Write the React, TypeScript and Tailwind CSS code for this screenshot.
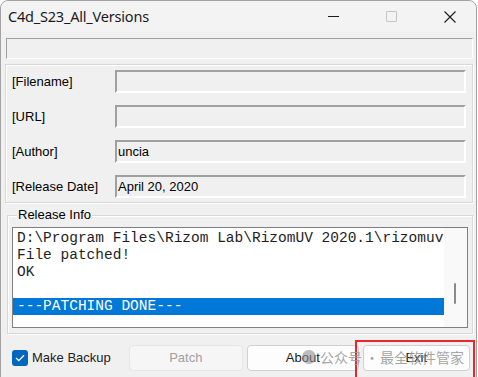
import React from "react";

const fieldRows = [
    { label: "[Filename]", value: "" },
    { label: "[URL]", value: "" },
    { label: "[Author]", value: "uncia" },
    { label: "[Release Date]", value: "April 20, 2020" },
];

const logLines = [
    "D:\\Program Files\\Rizom Lab\\RizomUV 2020.1\\rizomuv",
    "File patched!",
    "OK",
    "",
];

export default function App() {
    return (
        <div className="relative w-[478px] h-[377px] bg-white overflow-hidden font-['Liberation_Sans',Arial,sans-serif] text-[13px] text-black">
            <div className="w-[477px] h-[390px] rounded-t-[8px] border border-[#a3a3a3] bg-[#f0f0f0] flex flex-col">
                {/* title bar */}
                <div className="h-[31px] flex items-center bg-[#f3f3f3] rounded-t-[8px]">
                    <span className="ml-[7px] text-[14.5px] text-[#1b1b1b] font-['Noto_Sans',sans-serif] tracking-[-0.2px]">
                        C4d_S23_All_Versions
                    </span>
                    <div className="ml-auto flex items-center h-full">
                        <div className="w-[46px] h-full flex items-center justify-center">
                            <div className="w-[11px] h-px bg-[#1b1b1b]" />
                        </div>
                        <div className="w-[46px] h-full flex items-center justify-center ml-[12px]">
                            <div className="w-[11px] h-[11px] border border-[#c4c4c4] rounded-[1px]" />
                        </div>
                        <div className="w-[46px] h-full flex items-center justify-center ml-[13px] mr-[3px]">
                            <svg width="12" height="12" viewBox="0 0 12 12">
                                <path d="M0.5 0.5 L11.5 11.5 M11.5 0.5 L0.5 11.5" stroke="#1b1b1b" strokeWidth="1.1" />
                            </svg>
                        </div>
                    </div>
                </div>

                {/* progress / status box */}
                <div className="ml-[5px] mt-[6px] w-[467px] h-[21px] border border-t-[#a0a0a0] border-l-[#a0a0a0] border-b-white border-r-white bg-[#f0f0f0]" />

                {/* info group */}
                <div className="ml-[4px] mt-[5px] w-[468px] h-[139px] border border-[#d8d8d8] shadow-[inset_1px_1px_0_white,1px_1px_0_white] pt-[5px] flex flex-col gap-[12px]">
                    {fieldRows.map((row) => (
                        <div key={row.label} className="flex items-center h-[23px]">
                            <span className="ml-[6px] w-[103px]">{row.label}</span>
                            <div className="w-[351px] h-[23px] border-2 border-t-[#a0a0a0] border-l-[#a0a0a0] border-b-white border-r-white bg-[#f0f0f0] flex items-center pl-[1px]">
                                {row.value}
                            </div>
                        </div>
                    ))}
                </div>

                {/* release info group */}
                <div className="relative ml-[6px] mt-[12px] w-[466px] h-[119px] border border-[#d8d8d8] shadow-[inset_1px_1px_0_white,1px_1px_0_white]">
                    <span className="absolute left-[9px] -top-[9px] px-[1px] bg-[#f0f0f0] leading-[16px]">Release Info</span>
                    <div className="ml-[4px] mt-[11px] w-[456px] h-[101px] border border-[#7f7f7f] bg-white flex">
                        <div className="flex-1 pt-[2px] font-['Liberation_Mono','Courier_New',monospace] text-[14.5px] leading-[17px] text-[#1e1e1e] whitespace-pre overflow-hidden">
                            {logLines.map((line, i) => (
                                <div key={i} className="h-[17px] pl-[4px]">{line}</div>
                            ))}
                            <div className="h-[17px] pl-[4px] bg-[#0078d7] text-white">---PATCHING DONE---</div>
                        </div>
                        <div className="w-[23px] bg-[#f9f9f9] relative">
                            <div className="absolute left-[10px] top-[55px] w-[2px] h-[21px] rounded-full bg-[#8a8a8a]" />
                        </div>
                    </div>
                </div>

                {/* bottom row */}
                <div className="mt-[11px] flex items-center h-[26px]">
                    <div className="ml-[11px] w-[16px] h-[16px] rounded-[3px] bg-[#0067c0] flex items-center justify-center">
                        <svg width="10" height="8" viewBox="0 0 10 8">
                            <path d="M1 4 L3.8 6.6 L9 1.2" stroke="white" strokeWidth="1.3" fill="none" />
                        </svg>
                    </div>
                    <span className="ml-[4px] text-[13px] text-[#222]">Make Backup</span>
                    <button className="ml-[18px] w-[114px] h-[26px] rounded-[4px] border border-[#e6e6e6] bg-[#f6f6f6] text-[#a0a0a0] text-[13px]">
                        Patch
                    </button>
                    <button className="ml-[4px] w-[112px] h-[26px] rounded-[4px] border border-[#d0d0d0] bg-[#fdfdfd] text-[#1b1b1b] text-[13px]">
                        About
                    </button>
                    <button className="ml-[4px] w-[107px] h-[26px] rounded-[4px] border border-[#d0d0d0] bg-[#fdfdfd] text-[#1b1b1b] text-[13px]">
                        Exit
                    </button>
                </div>
            </div>

            {/* highlight frame */}
            <div className="absolute left-[355px] top-[340px] w-[120px] h-[40px] border-2 border-[#e8262b]" />

            {/* watermark */}
            <div className="absolute left-[302px] top-[348px] flex items-center whitespace-nowrap text-[#9a9a9a]/90 text-[14px] leading-[18px] font-['Noto_Sans_CJK_SC',sans-serif] pointer-events-none">
                <div className="w-[14px] h-[14px] rounded-full bg-[#8f8f8f]/60" />
                <span className="ml-[4px]">公众号</span>
                <span className="ml-[3px]">·</span>
                <span className="ml-[1px]">最全软件管家</span>
            </div>
        </div>
    );
}
